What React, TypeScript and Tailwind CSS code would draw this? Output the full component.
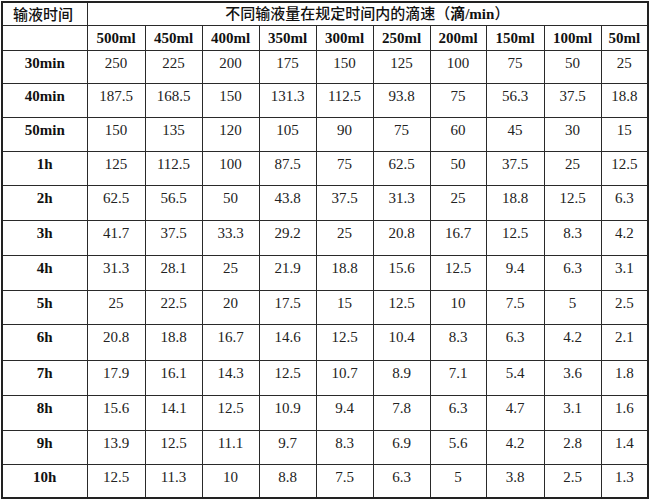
const volumes = ['500ml', '450ml', '400ml', '350ml', '300ml', '250ml', '200ml', '150ml', '100ml', '50ml']

const colWidths = [
  'w-[84px]',
  'w-[58px]',
  'w-[57px]',
  'w-[57px]',
  'w-[57px]',
  'w-[57px]',
  'w-[57px]',
  'w-[56px]',
  'w-[58px]',
  'w-[57px]',
  'w-[46px]',
]

const rows = [
  { time: '30min', h: 'h-[33px]', v: ['250', '225', '200', '175', '150', '125', '100', '75', '50', '25'] },
  { time: '40min', h: 'h-[34px]', v: ['187.5', '168.5', '150', '131.3', '112.5', '93.8', '75', '56.3', '37.5', '18.8'] },
  { time: '50min', h: 'h-[34px]', v: ['150', '135', '120', '105', '90', '75', '60', '45', '30', '15'] },
  { time: '1h', h: 'h-[34px]', v: ['125', '112.5', '100', '87.5', '75', '62.5', '50', '37.5', '25', '12.5'] },
  { time: '2h', h: 'h-[35px]', v: ['62.5', '56.5', '50', '43.8', '37.5', '31.3', '25', '18.8', '12.5', '6.3'] },
  { time: '3h', h: 'h-[35px]', v: ['41.7', '37.5', '33.3', '29.2', '25', '20.8', '16.7', '12.5', '8.3', '4.2'] },
  { time: '4h', h: 'h-[35px]', v: ['31.3', '28.1', '25', '21.9', '18.8', '15.6', '12.5', '9.4', '6.3', '3.1'] },
  { time: '5h', h: 'h-[34px]', v: ['25', '22.5', '20', '17.5', '15', '12.5', '10', '7.5', '5', '2.5'] },
  { time: '6h', h: 'h-[36px]', v: ['20.8', '18.8', '16.7', '14.6', '12.5', '10.4', '8.3', '6.3', '4.2', '2.1'] },
  { time: '7h', h: 'h-[35px]', v: ['17.9', '16.1', '14.3', '12.5', '10.7', '8.9', '7.1', '5.4', '3.6', '1.8'] },
  { time: '8h', h: 'h-[35px]', v: ['15.6', '14.1', '12.5', '10.9', '9.4', '7.8', '6.3', '4.7', '3.1', '1.6'] },
  { time: '9h', h: 'h-[34px]', v: ['13.9', '12.5', '11.1', '9.7', '8.3', '6.9', '5.6', '4.2', '2.8', '1.4'] },
  { time: '10h', h: 'h-[33px]', v: ['12.5', '11.3', '10', '8.8', '7.5', '6.3', '5', '3.8', '2.5', '1.3'] },
]

const cell = 'border border-[#2a2a2a] p-0'
const serif = "[font-family:'Liberation_Serif','Noto_Sans_CJK_SC',serif]"
const cjk = "[font-family:'Noto_Sans_CJK_SC',sans-serif]"

export default function App() {
  return (
    <div className="min-h-[500px] w-[651px] bg-white">
      <div className="ml-px mt-px w-[648px] border-2 border-[#222]">
        <table className={`w-[644px] table-fixed border-collapse border-hidden ${serif} text-[15px] text-[#222]`}>
          <colgroup>
            {colWidths.map((w, i) => (
              <col key={i} className={w} />
            ))}
          </colgroup>
          <thead>
            <tr className="h-[22px]">
              <th className={`${cell} pl-[10px] text-left ${cjk} font-medium leading-[20px] text-[#111]`}>
                输液时间
              </th>
              <th
                colSpan={10}
                className={`${cell} text-center ${cjk} font-medium leading-[20px] text-[#111]`}
              >
                不同输液量在规定时间内的滴速（<span className="font-bold">滴</span>
                <span className={`${serif} font-bold`}>/min</span>）
              </th>
            </tr>
            <tr className="h-[25px]">
              <th className={cell}></th>
              {volumes.map((v) => (
                <th key={v} className={`${cell} text-center font-bold leading-[18px] text-[#111]`}>
                  {v}
                </th>
              ))}
            </tr>
          </thead>
          <tbody>
            {rows.map((r) => (
              <tr key={r.time} className={r.h}>
                <td className={`${cell} pt-[3px] text-center align-top font-bold leading-[18px] text-[#111]`}>
                  {r.time}
                </td>
                {r.v.map((n, i) => (
                  <td key={i} className={`${cell} pt-[3px] text-center align-top leading-[18px] text-[#222]`}>
                    {n}
                  </td>
                ))}
              </tr>
            ))}
          </tbody>
        </table>
      </div>
    </div>
  )
}
